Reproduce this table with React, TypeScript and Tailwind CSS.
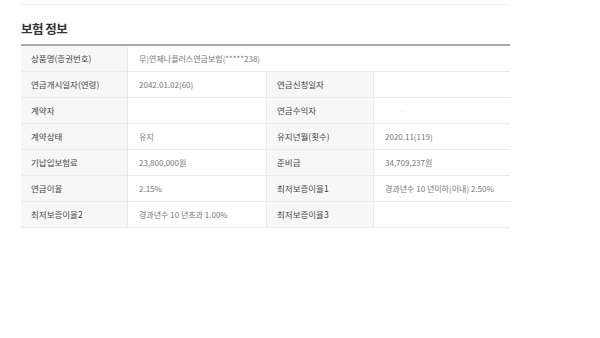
const rows: [string, string, string, string][] = [
  ['연금개시일자(연령)', '2042.01.02(60)', '연금신청일자', ''],
  ['계약자', '', '연금수익자', '-'],
  ['계약상태', '유지', '유지년월(횟수)', '2020.11(119)'],
  ['기납입보험료', '23,800,000원', '준비금', '34,709,237원'],
  ['연금이율', '2.15%', '최저보증이율1', '경과년수 10 년이하(이내) 2.50%'],
  ['최저보증이율2', '경과년수 10 년초과 1.00%', '최저보증이율3', ''],
];

function Label({ children }: { children: React.ReactNode }) {
  return (
    <div className="h-[26px] flex items-center pl-[10px] bg-[#f7f7f7] border-r border-b border-[#ebebeb] text-[8.5px] text-[#444]">
      {children}
    </div>
  );
}

function Value({ children, last }: { children: React.ReactNode; last?: boolean }) {
  return (
    <div
      className={`h-[26px] flex items-center pl-[11px] border-b border-[#ebebeb] text-[8px] text-[#777] ${
        last ? '' : 'border-r'
      }`}
    >
      {children}
    </div>
  );
}

function Row({ l1, v1, l2, v2 }: { l1: string; v1: string; l2: string; v2: string }) {
  return (
    <>
      <Label>{l1}</Label>
      <Value>{v1}</Value>
      <Label>{l2}</Label>
      <Value last>
        {v2 === '-' ? <span className="text-[#ccc] text-[6px] ml-[16px]">-</span> : v2}
      </Value>
    </>
  );
}

export default function App() {
  return (
    <div
      className="w-[600px] h-[338px] bg-white"
      style={{ fontFamily: '"Noto Sans CJK KR", "Noto Sans", sans-serif' }}
    >
      <div className="ml-[21px] w-[489px] pt-[4px]">
        <div className="h-px bg-[#f0f0f0]" />
        <h2 className="mt-[16px] text-[12.5px] font-semibold text-[#333] leading-[16px] tracking-[-0.5px]">
          보험 정보
        </h2>

        <div className="mt-[7px] border-t-2 border-[#a9a9a9] grid grid-cols-[107px_139px_107px_136px]">
          <Label>상품명(증권번호)</Label>
          <div className="col-span-3">
            <Value last>무)연제나플러스연금보험(*****238)</Value>
          </div>

          {rows.map(([l1, v1, l2, v2]) => (
            <Row key={l1} l1={l1} v1={v1} l2={l2} v2={v2} />
          ))}
        </div>
      </div>
    </div>
  );
}
